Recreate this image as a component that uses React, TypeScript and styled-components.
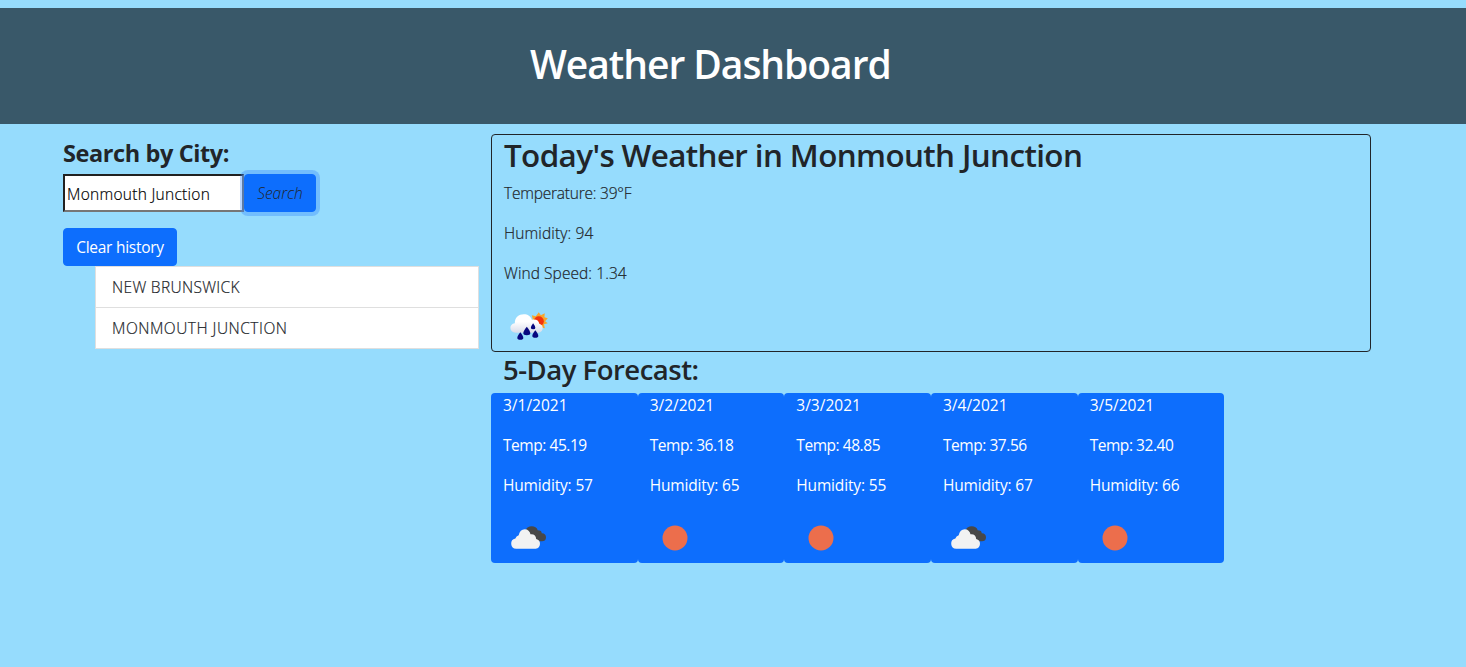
import React from "react";
import styled, { createGlobalStyle } from "styled-components";

const GlobalStyle = createGlobalStyle`
  *, *::before, *::after { box-sizing: border-box; }
  body {
    margin: 0;
    min-height: 667px;
    background: #96dcfd;
    color: #212529;
    font-family: "Open Sans", "Noto Sans", sans-serif;
    font-size: 15.5px;
    line-height: 24px;
    overflow: hidden;
  }
  h1, h2, h3, h4, p, ul { margin: 0; padding: 0; font-weight: inherit; }
`;

const Header = styled.header`
  height: 116px;
  margin-top: 8px;
  padding: 32px 0 0 530px;
  background: #395869;
`;

const Title = styled.h1`
  color: #fff;
  font-size: 39px;
  line-height: 48px;
  && { font-weight: 600; }
  letter-spacing: -1.04px;
  white-space: nowrap;
`;

const Columns = styled.main`
  display: grid;
  grid-template-columns: 440px 880px;
  margin-left: 51px;
  padding-top: 10px;
`;

const Sidebar = styled.section`
  padding: 5px 12px 0;
`;

const SearchHeading = styled.h4`
  font-size: 23.5px;
  line-height: 28px;
  margin-bottom: 7px;
  && { font-weight: 700; }
  letter-spacing: -0.4px;
`;

const SearchForm = styled.form`
  display: flex;
  height: 38px;
  margin-bottom: 16px;
`;

const CityInput = styled.input`
  width: 181px;
  height: 38px;
  padding: 2px 2px 0;
  border: 2px inset #767676;
  border-radius: 0;
  background: #fff;
  color: #000;
  font: 300 15.5px/24px "Open Sans", "Noto Sans", sans-serif;
  letter-spacing: 0.28px;
  -webkit-text-stroke: 0.2px #000;
  outline: none;
`;

const Button = styled.button<{ $focused?: boolean }>`
  height: 38px;
  padding: 6px 0;
  width: ${(p) => (p.$focused ? "72px" : "114px")};
  border: 1px solid #0d6efd;
  border-radius: 4px;
  background: #0d6efd;
  color: ${(p) => (p.$focused ? "#212529" : "#fff")};
  box-shadow: ${(p) => (p.$focused ? "0 0 0 4px rgba(49, 132, 253, 0.35)" : "none")};
  font-family: inherit;
  font-size: 15.5px;
  font-style: ${(p) => (p.$focused ? "italic" : "normal")};
  font-weight: ${(p) => (p.$focused ? 300 : 400)};
  line-height: 24px;
  letter-spacing: ${(p) => (p.$focused ? "0" : "-0.27px")};
`;

const History = styled.ul`
  margin-left: 32px;
  list-style: none;
  border: 1px solid #dfdfdf;
  background: #fff;
`;

const HistoryItem = styled.li<{ $tracking: number }>`
  height: 41px;
  padding: 8px 16px;
  font-weight: 300;
  letter-spacing: ${(p) => p.$tracking}px;
  -webkit-text-stroke: 0.2px currentColor;
  & + & { border-top: 1px solid #dfdfdf; }
  &:first-child { height: 40px; }
`;

const Today = styled.article`
  height: 218px;
  padding: 1px 12px 0;
  border: 1px solid #212529;
  border-radius: 4px;
`;

const TodayHeading = styled.h2`
  font-size: 31.4px;
  line-height: 38px;
  margin-bottom: 7px;
  && { font-weight: 600; }
  letter-spacing: -0.61px;
  white-space: nowrap;
`;

const Reading = styled.p<{ $light?: boolean; $tracking: number }>`
  && { font-weight: ${(p) => (p.$light ? 300 : 400)}; }
  margin-bottom: 16px;
  letter-spacing: ${(p) => p.$tracking}px;
  -webkit-text-stroke: ${(p) => (p.$light ? "0.2px currentColor" : "0")};
  white-space: nowrap;
`;

const ForecastHeading = styled.h3`
  font-size: 27.5px;
  line-height: 34px;
  padding: 1px 12px 6px;
  && { font-weight: 600; }
  letter-spacing: -0.5px;
`;

const Forecast = styled.div`
  display: grid;
  grid-template-columns: repeat(5, 146.66px);
`;

const DayCard = styled.article`
  height: 170px;
  padding: 0 12px;
  border-radius: 4px;
  background: #0d6efd;
  color: #fff;
`;

const WeatherIcon = styled.svg`
  display: block;
  width: 50px;
  height: 50px;
`;

const Clouds = () => (
  <WeatherIcon viewBox="0.3 -0.3 50 50">
    <path fill="#484848" d="M23 17c1-3 3-4 6-4 3 0 5 1 6 4 3 0 4 1 4 3 3 0 4.300 2 4.300 4 0 3-2 4-4 4H28z" />
    <path fill="#f2f2f2" d="M13.500 35.500a5.200 5.200 0 0 1-.8-10.300 4.600 4.600 0 0 1 3.300-3.200c.7-4 3-6 6-6 3.200 0 5.200 2 5.800 5 3.500-.4 5.500 1.500 5.700 4.700a5 5 0 0 1-.5 9.800z" />
  </WeatherIcon>
);

const Sun = () => (
  <WeatherIcon viewBox="0 0 50 50">
    <circle cx="25" cy="25" r="12.500" fill="#ec6e4c" />
  </WeatherIcon>
);

const SunShower = () => (
  <WeatherIcon viewBox="0.2 0.7 50 50">
    <defs>
      <linearGradient id="cloud" x1="0" y1="0" x2="0" y2="1">
        <stop offset="0.4" stopColor="#fff" />
        <stop offset="1" stopColor="#d8dcea" />
      </linearGradient>
    </defs>
    <path fill="#f9a52b" d="m35 12 2 3 4-2-.4 4 3.400 1-2.700 3 2.700 2-3.800 1 .8 4-4-1-2 3-3-3-4 1 1-4-3-2 3-3-1-4 4 1z" />
    <circle cx="35" cy="21" r="5" fill="#f4330b" />
    <path fill="url(#cloud)" d="M12 32.500c-7-.5-7-9-1-9.500 0-6 4-9 9-9 4 0 7 2 8 5.500 4-1 7 .5 7.500 4 5 1 4.500 8.500-1 9z" />
    <g fill="#07077f">
      <path d="M29.300 23q-4.500 6 0 6t0-6" />
      <path d="M23 26.500q-7 8.500 0 8.500t0-8.500" />
      <path d="M16.500 32q-6 7.500 0 7.500t0-7.500" />
      <path d="M31.500 30q-6 7.500 0 7.500t0-7.500" />
    </g>
  </WeatherIcon>
);

const days = [
  { date: "3/1/2021", temp: "45.19", humidity: 57, Icon: Clouds },
  { date: "3/2/2021", temp: "36.18", humidity: 65, Icon: Sun },
  { date: "3/3/2021", temp: "48.85", humidity: 55, Icon: Sun },
  { date: "3/4/2021", temp: "37.56", humidity: 67, Icon: Clouds },
  { date: "3/5/2021", temp: "32.40", humidity: 66, Icon: Sun },
];

export default function App() {
  return (
    <>
      <GlobalStyle />
      <Header>
        <Title>Weather Dashboard</Title>
      </Header>
      <Columns>
        <Sidebar>
          <SearchHeading>Search by City:</SearchHeading>
          <SearchForm>
            <CityInput defaultValue="Monmouth Junction" />
            <Button type="button" $focused>Search</Button>
          </SearchForm>
          <Button type="button">Clear history</Button>
          <History>
            <HistoryItem $tracking={0.32}>NEW BRUNSWICK</HistoryItem>
            <HistoryItem $tracking={0.5}>MONMOUTH JUNCTION</HistoryItem>
          </History>
        </Sidebar>
        <section>
          <Today>
            <TodayHeading>Today's Weather in Monmouth Junction</TodayHeading>
            <Reading $light $tracking={-0.22}>Temperature: 39°F</Reading>
            <Reading $light $tracking={0.12}>Humidity: 94</Reading>
            <Reading $light $tracking={0.07}>Wind Speed: 1.34</Reading>
            <SunShower />
          </Today>
          <ForecastHeading>5-Day Forecast:</ForecastHeading>
          <Forecast>
            {days.map(({ date, temp, humidity, Icon }) => (
              <DayCard key={date}>
                <Reading $tracking={0}>{date}</Reading>
                <Reading $tracking={-0.45}>Temp: {temp}</Reading>
                <Reading $tracking={-0.16}>Humidity: {humidity}</Reading>
                <Icon />
              </DayCard>
            ))}
          </Forecast>
        </section>
      </Columns>
    </>
  );
}
